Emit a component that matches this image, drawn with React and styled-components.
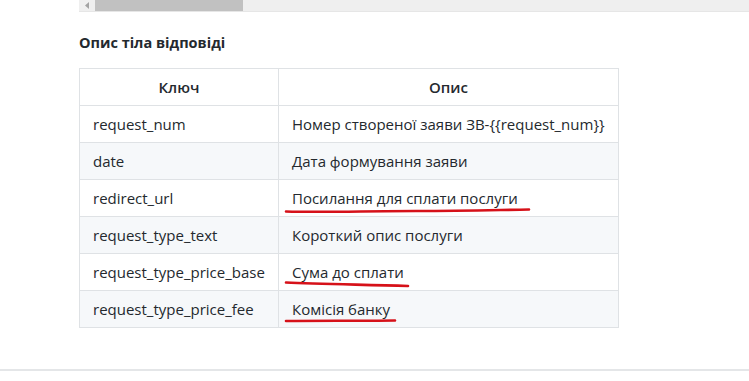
import React from 'react';
import styled, { createGlobalStyle } from 'styled-components';

const GlobalStyle = createGlobalStyle`
  body {
    margin: 0;
    background: #fff;
    font-family: 'Open Sans', 'Noto Sans', sans-serif;
    color: #24292e;
  }
`;

const Page = styled.div`
  width: 749px;
  height: 381px;
  display: flex;
  flex-direction: column;
  overflow: hidden;
`;

const Content = styled.div`
  padding-left: 79px;
  flex: 1;
`;

const Scrollbar = styled.div`
  height: 11px;
  background: #efefef;
  border-bottom: 1px solid #e6e6e6;
  display: flex;
  align-items: stretch;
`;

const ArrowButton = styled.div`
  width: 16px;
  display: flex;
  align-items: center;
  justify-content: center;
`;

const Thumb = styled.div`
  width: 148px;
  background: #c1c1c1;
`;

const Heading = styled.h3`
  margin: 21px 0 15px;
  font-size: 14.5px;
  font-weight: 700;
  line-height: 20px;
`;

const Table = styled.table`
  border-collapse: collapse;
  width: 540px;
  font-size: 15px;
`;

const Row = styled.tr`
  background: ${p => (p.$striped ? '#f6f8fa' : '#fff')};
  border-top: 1px solid #c6cbd1;
`;

const HeadCell = styled.th`
  border: 1px solid #dfe2e5;
  height: 37px;
  padding: 0 13px;
  font-weight: 600;
  text-align: center;
  width: ${p => p.$w}px;
  box-sizing: border-box;
`;

const Cell = styled.td`
  border: 1px solid #dfe2e5;
  height: 37px;
  padding: 0 13px;
  box-sizing: border-box;
`;

const Marked = styled.span`
  position: relative;
  display: inline-block;
`;

const Scribble = styled.svg`
  position: absolute;
  left: -6px;
  top: ${p => p.$top}px;
  overflow: visible;
`;

const BottomRule = styled.div`
  height: 2px;
  background: #e4e6e8;
  margin-bottom: 10px;
`;

const rows = [
  { key: 'request_num', desc: 'Номер створеної заяви ЗВ-{{request_num}}' },
  { key: 'date', desc: 'Дата формування заяви' },
  {
    key: 'redirect_url',
    desc: 'Посилання для сплати послуги',
    mark: { w: 244, d: 'M0 2.5 C40 3.5 80 2 130 2 S210 1 243 0.5', top: 21 },
  },
  { key: 'request_type_text', desc: 'Короткий опис послуги' },
  {
    key: 'request_type_price_base',
    desc: 'Сума до сплати',
    mark: { w: 123, d: 'M0 0.5 C30 2 70 2.5 122 4', top: 20 },
  },
  {
    key: 'request_type_price_fee',
    desc: 'Комісія банку',
    mark: { w: 110, d: 'M0 1 C30 0.5 70 1 109 0.5', top: 21 },
  },
];

function Underline({ mark }) {
  return (
    <Scribble $top={mark.top} width={mark.w} height="6" viewBox={`0 0 ${mark.w} 6`}>
      <path d={mark.d} fill="none" stroke="#d61119" strokeWidth="2.6" strokeLinecap="round" />
    </Scribble>
  );
}

export default function App() {
  return (
    <Page>
      <GlobalStyle />
      <Content>
        <Scrollbar>
          <ArrowButton>
            <svg width="5" height="7" viewBox="0 0 5 7">
              <path d="M4 0 L0 3.5 L4 7 Z" fill="#a3a3a3" />
            </svg>
          </ArrowButton>
          <Thumb />
        </Scrollbar>
        <Heading>Опис тіла відповіді</Heading>
        <Table>
          <thead>
            <Row>
              <HeadCell $w={199}>Ключ</HeadCell>
              <HeadCell $w={341}>Опис</HeadCell>
            </Row>
          </thead>
          <tbody>
            {rows.map((r, i) => (
              <Row key={r.key} $striped={i % 2 === 1}>
                <Cell>{r.key}</Cell>
                <Cell>
                  {r.mark ? (
                    <Marked>
                      {r.desc}
                      <Underline mark={r.mark} />
                    </Marked>
                  ) : (
                    r.desc
                  )}
                </Cell>
              </Row>
            ))}
          </tbody>
        </Table>
      </Content>
      <BottomRule />
    </Page>
  );
}
